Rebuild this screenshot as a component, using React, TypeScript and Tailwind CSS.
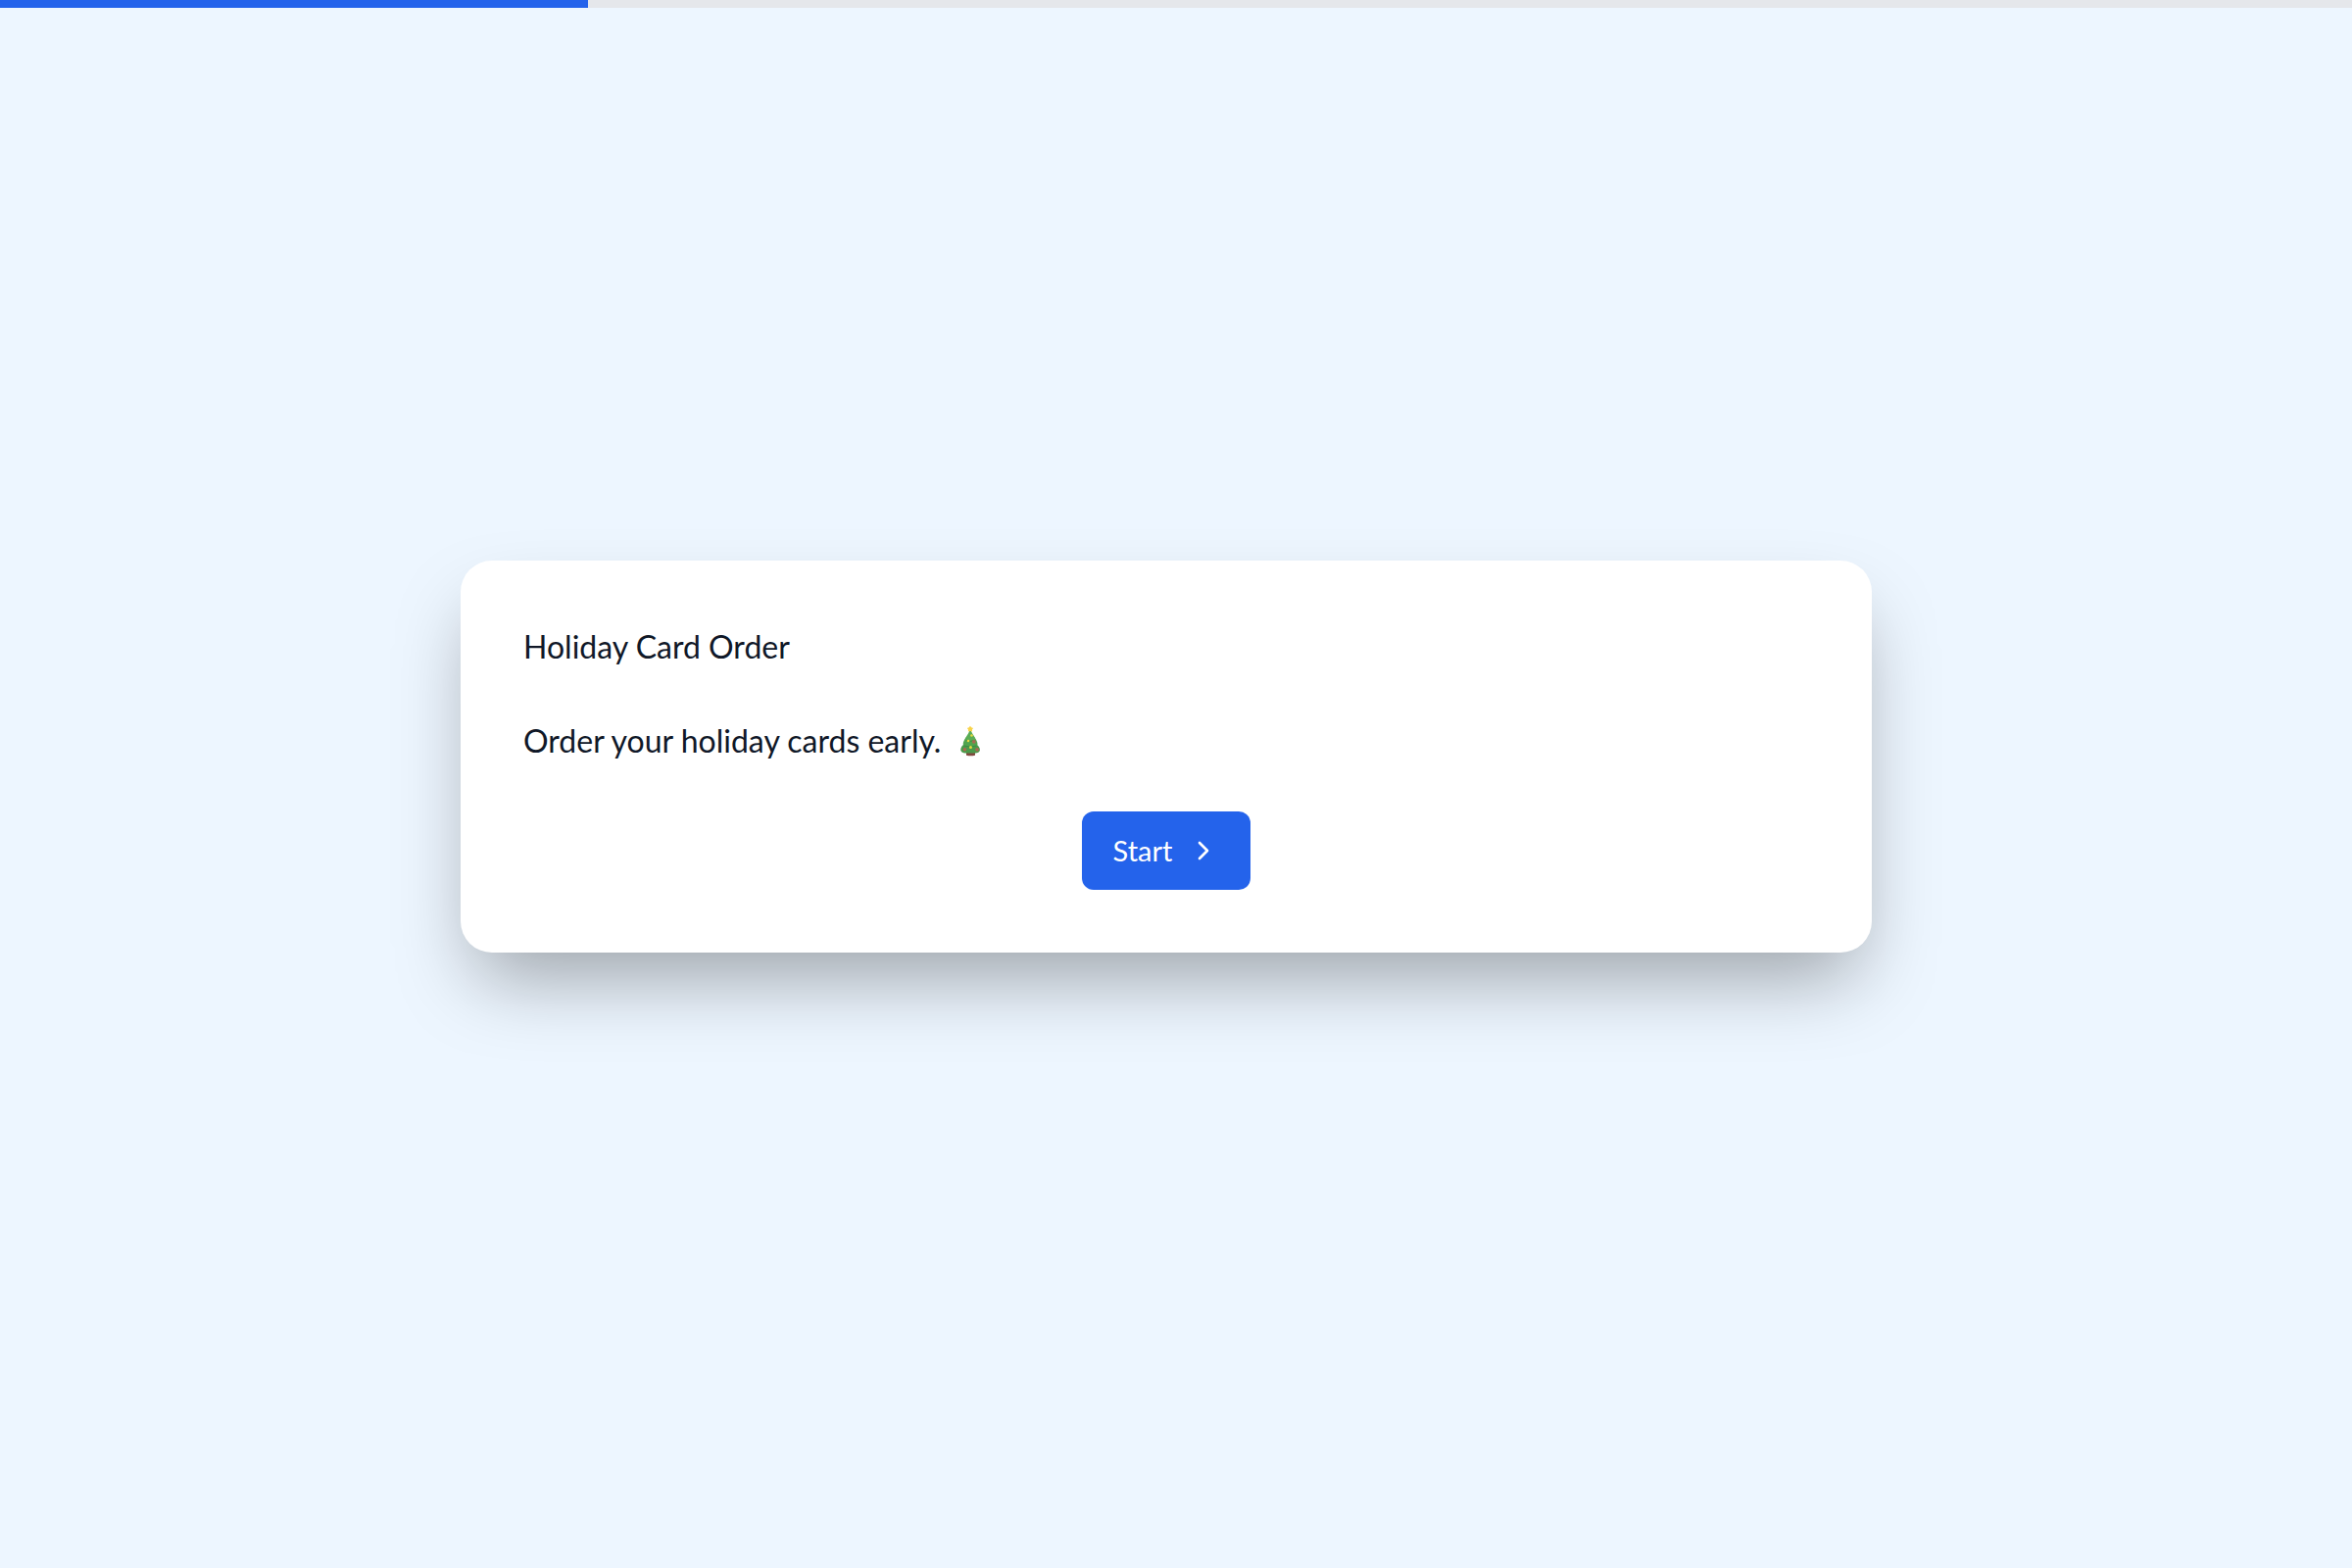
import React from 'react';
import { ChevronRight } from 'lucide-react';

interface ProgressBarProps {
  value: number;
}

const ProgressBar: React.FC<ProgressBarProps> = ({ value }) => (
  <div
    role="progressbar"
    aria-label="Form progress"
    aria-valuenow={value}
    aria-valuemin={0}
    aria-valuemax={100}
    className="h-2 w-full bg-gray-200"
  >
    <div className="h-full bg-[#2463eb]" style={{ width: `${value}%` }} />
  </div>
);

// Decorated tree shown after the intro sentence
const ChristmasTree: React.FC = () => (
  <svg viewBox="0 0 20 32" className="h-8 w-5" role="img" aria-label="Christmas tree">
    <path d="M6 27h9v3.800q-4.500 1-9 0z" fill="#81493f" />
    <path d="M3.500 19.500C1.500 21 0 23.500 0.300 25.500c.4 2 2.300 2.800 4.700 2.900h10c2.700-.1 4.600-.9 4.900-2.900.2-2-1.400-4.500-3.400-6z" fill="#4b9a4a" />
    <path d="M5.500 12.500C4 15 2.400 17.500 2.800 19.500c.3 1.700 2.200 2.400 4.200 2.500h6.500c2-.1 3.800-.8 4-2.500.2-2-1.300-4.500-2.900-7z" fill="#51a44e" />
    <path d="M10 4C9 7.500 6.500 10.500 5.300 13c-.8 2 .8 3.200 2.700 3.300h4.300c1.900-.1 3.400-1.300 2.700-3.300C13.800 10.500 11.300 7.500 10 4z" fill="#5aad55" />
    <path d="M6 15.500q4 1.600 8.500 0M3.800 21q6 2 12.500 0" fill="none" stroke="#39833f" strokeWidth="0.8" />
    <path d="M10 .8l1.200 1.500 1.900.6-1.100 1.600.1 2-2.100-.6-2.100.6.1-2-1.100-1.600 1.900-.6z" fill="#f8d34a" />
    <circle cx="11.500" cy="10.500" r="1.300" fill="#e5d842" />
    <circle cx="8" cy="16" r="1.300" fill="#e5d842" />
    <circle cx="10.500" cy="22.500" r="1.500" fill="#e5d842" />
    <circle cx="13.800" cy="16.800" r="1.900" fill="#a96b50" />
    <circle cx="4.500" cy="24.800" r="1.800" fill="#a96b50" />
    <circle cx="17" cy="24.800" r="1.900" fill="#a96b50" />
  </svg>
);

const App: React.FC = () => {
  return (
    <div className="flex min-h-screen flex-col bg-[#edf6ff] font-['Lato',sans-serif] text-gray-900">
      <ProgressBar value={25} />
      <main className="flex flex-1 items-center justify-center pr-5 pb-16">
        <section className="w-full max-w-[1440px] rounded-[32px] bg-white p-16 shadow-[0_40px_80px_-16px_rgba(0,0,0,0.35)]">
          <h1 className="text-[32px] leading-12">Holiday Card Order</h1>
          <p className="mt-12 flex items-center text-[32px] leading-12">
            Order your holiday cards early.
            <span className="ml-5">
              <ChristmasTree />
            </span>
          </p>
          <div className="mt-12 flex justify-center">
            <button
              type="button"
              className="flex h-20 items-center gap-4 rounded-xl bg-[#2463eb] px-8 text-[29px] leading-10 text-white hover:bg-blue-700"
            >
              Start
              <ChevronRight className="h-8 w-8" />
            </button>
          </div>
        </section>
      </main>
    </div>
  );
};

export default App;
